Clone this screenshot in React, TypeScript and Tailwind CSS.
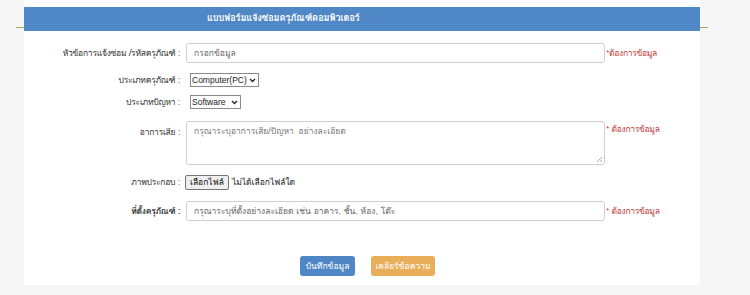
import React from "react";

const font = { fontFamily: '"Tahoma", "Loma", "Garuda", "Waree", "Noto Sans Thai", "Noto Sans", "DejaVu Sans", sans-serif' };

function Required({ space = true, top = false }: { space?: boolean; top?: boolean }) {
  return (
    <span className={`ml-[1px] whitespace-nowrap text-[8.5px] tracking-[-0.3px] text-[#c03b3b] ${top ? "self-start mt-[2px]" : ""}`}>
      {space ? "* ต้องการข้อมูล" : "*ต้องการข้อมูล"}
    </span>
  );
}

function Label({ children, bold = false, top = false }: { children: React.ReactNode; bold?: boolean; top?: boolean }) {
  return (
    <div
      className={`w-[157px] shrink-0 whitespace-nowrap pr-[1px] text-right text-[8.5px] tracking-[-0.25px] text-[#333] ${bold ? "font-bold" : ""} ${top ? "self-start pt-[5px]" : ""}`}
    >
      {children}
    </div>
  );
}

function FakeSelect({ value, gap }: { value: string; gap: string }) {
  return (
    <div
      className={`ml-[9px] flex h-[14px] items-center border border-[#8a8a8a] bg-white pl-[1px] pr-[2px] text-[8.5px] leading-none text-[#222] ${gap}`}
      style={{ fontFamily: '"Liberation Sans", Arial, sans-serif' }}
    >
      <span className="whitespace-nowrap">{value}</span>
      <svg width="7" height="5" viewBox="0 0 7 5" className="shrink-0">
        <path d="M1 1 L3.5 3.5 L6 1" fill="none" stroke="#222" strokeWidth="1.3" />
      </svg>
    </div>
  );
}

export default function App() {
  return (
    <div className="relative h-[295px] w-[750px] overflow-hidden bg-[#f6f6f6]" style={font}>
      <div className="absolute left-[16px] top-[27px] h-[1px] w-[692px] bg-[#a4a861]" />
      <div className="relative ml-[24px] w-[676px] bg-white pb-[9px] pt-[7px]">
        <div className="flex h-[24px] items-center whitespace-nowrap bg-[#5087c7] pl-[183px] text-[9px] font-bold text-white">
          แบบฟอร์มแจ้งซ่อมครุภัณฑ์คอมพิวเตอร์
        </div>

        <div className="mt-[12px] flex h-[20px] items-center">
          <Label>หัวข้อการแจ้งซ่อม /รหัสครุภัณฑ์ :</Label>
          <div className="ml-[5px] flex h-[20px] w-[419px] items-center rounded-[3px] border border-[#cfcfcf] pl-[7px] text-[8.5px] text-[#666]">
            กรอกข้อมูล
          </div>
          <Required space={false} />
        </div>

        <div className="mt-[10px] flex h-[14px] items-center">
          <Label>ประเภทครุภัณฑ์ :</Label>
          <FakeSelect value="Computer(PC)" gap="gap-[2px]" />
        </div>

        <div className="mt-[8px] flex h-[14px] items-center">
          <Label>ประเภทปัญหา :</Label>
          <FakeSelect value="Software" gap="gap-[5px]" />
        </div>

        <div className="mt-[12px] flex h-[44px]">
          <Label top>อาการเสีย :</Label>
          <div className="relative ml-[5px] h-[44px] w-[419px] rounded-[3px] border border-[#cfcfcf] pl-[7px] pt-[3px] text-[8.5px] text-[#777]">
            กรุณาระบุอาการเสีย/ปัญหา&nbsp;&nbsp;อย่างละเอียด
            <svg className="absolute bottom-[1px] right-[1px]" width="7" height="7" viewBox="0 0 7 7">
              <path d="M6 1 L1 6 M6 4 L4 6" stroke="#999" strokeWidth="0.8" />
            </svg>
          </div>
          <Required top />
        </div>

        <div className="mt-[10px] flex h-[15px] items-center">
          <Label>ภาพประกอบ :</Label>
          <div className="ml-[4px] flex h-[15px] items-center whitespace-nowrap rounded-[2px] border border-[#767676] bg-[#efefef] px-[4px] text-[8.5px] text-[#111]">
            เลือกไฟล์
          </div>
          <span className="ml-[3px] whitespace-nowrap text-[8.5px] text-[#222]">ไม่ได้เลือกไฟล์ใด</span>
        </div>

        <div className="mt-[11px] flex h-[20px] items-center">
          <Label bold>ที่ตั้งครุภัณฑ์ :</Label>
          <div className="ml-[5px] flex h-[20px] w-[419px] items-center whitespace-nowrap rounded-[3px] border border-[#cfcfcf] pl-[7px] text-[8.5px] text-[#666]">
            กรุณาระบุที่ตั้งอย่างละเอียด เช่น อาคาร, ชั้น, ห้อง, โต๊ะ
          </div>
          <Required />
        </div>

        <div className="mt-[35px] flex h-[20px] items-center pl-[276px]">
          <button className="flex h-[20px] w-[55px] items-center justify-center whitespace-nowrap rounded-[3px] bg-[#4f86c6] text-[8.5px] text-white">
            บันทึกข้อมูล
          </button>
          <button className="ml-[16px] flex h-[20px] w-[64px] items-center justify-center whitespace-nowrap rounded-[3px] bg-[#e8ae5a] text-[8.5px] text-white">
            เคลียร์ข้อความ
          </button>
        </div>
      </div>
    </div>
  );
}
